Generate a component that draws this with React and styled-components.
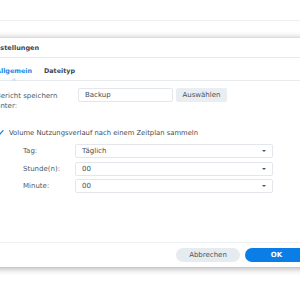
import React from 'react';
import styled, { createGlobalStyle } from 'styled-components';

const GlobalStyle = createGlobalStyle`
  html, body {
    margin: 0;
    padding: 0;
    background: #ffffff;
    overflow: hidden;
  }
  body {
    font-family: "DejaVu Sans", Verdana, sans-serif;
    color: #414b55;
  }
`;

const Page = styled.div`
  width: 300px;
  height: 300px;
  overflow: hidden;
  background: #ffffff;
`;

const BackBar = styled.div`
  height: 20px;
  border-bottom: 1px solid #eceff2;
`;

const Dialog = styled.div`
  width: 346px;
  margin: 17px 0 0 -16px;
  background: #ffffff;
  box-shadow: 0 1px 7px rgba(0, 0, 0, 0.38);
  display: flex;
  flex-direction: column;
`;

const Header = styled.div`
  height: 19px;
  display: flex;
  align-items: center;
  padding-left: 5px;
  border-bottom: 1px solid #e8ebee;
  font-size: 6.5px;
  font-weight: bold;
  color: #3c4650;
`;

const TabBar = styled.div`
  height: 19px;
  display: flex;
  align-items: center;
  gap: 12px;
  padding: 3px 0 0 12px;
  border-bottom: 1px solid #e8ebee;
`;

const Tab = styled.div`
  position: relative;
  height: 100%;
  display: flex;
  align-items: center;
  font-size: 6.4px;
  font-weight: bold;
  color: ${(p) => (p.$active ? '#1a84e0' : '#3c4650')};

  &::after {
    content: '';
    display: ${(p) => (p.$active ? 'block' : 'none')};
    position: absolute;
    left: 50%;
    bottom: -1px;
    margin-left: -3px;
    border-left: 3px solid transparent;
    border-right: 3px solid transparent;
    border-bottom: 3px solid #cfe3f6;
  }
`;

const Body = styled.div`
  box-sizing: border-box;
  height: 161px;
  padding: 7px 0 0 12px;
  display: flex;
  flex-direction: column;
`;

const FieldRow = styled.div`
  display: grid;
  grid-template-columns: 79px 95px 51px;
  align-items: start;
  column-gap: 3px;
`;

const Label = styled.div`
  font-size: 7px;
  line-height: 10px;
  color: #505a64;
  padding-top: ${(p) => p.$top || 0}px;
  padding-left: ${(p) => p.$indent || 0}px;
`;

const TextInput = styled.div`
  box-sizing: border-box;
  height: 14px;
  border: 1px solid #e3e7eb;
  border-radius: 2px;
  padding-left: 6px;
  display: flex;
  align-items: center;
  font-size: 7px;
  color: #414b55;
`;

const GrayButton = styled.div`
  box-sizing: border-box;
  height: 14px;
  border-radius: 2px;
  background: #e9eef3;
  display: flex;
  align-items: center;
  justify-content: center;
  font-size: 7px;
  color: #46505a;
`;

const CheckRow = styled.div`
  display: flex;
  align-items: center;
  gap: 5px;
  height: 8px;
  margin: 18px 0 0 0;
  font-size: 6.8px;
  color: #414b55;
`;

const ScheduleList = styled.div`
  display: flex;
  flex-direction: column;
  gap: 3.5px;
  margin-top: 7px;
`;

const ScheduleRow = styled.div`
  display: grid;
  grid-template-columns: 79px 198px;
  align-items: center;
`;

const Select = styled.div`
  box-sizing: border-box;
  height: 14px;
  border: 1px solid #e3e7eb;
  border-radius: 2px;
  padding: 0 6px;
  display: flex;
  align-items: center;
  justify-content: space-between;
  font-size: 7px;
  color: #414b55;
`;

const Caret = styled.span`
  width: 0;
  height: 0;
  border-left: 2.5px solid transparent;
  border-right: 2.5px solid transparent;
  border-top: 2.5px solid #4a545e;
`;

const Footer = styled.div`
  height: 24px;
  border-top: 1px solid #edf0f3;
  display: flex;
  align-items: center;
  gap: 5px;
  padding-left: 192px;
`;

const PillButton = styled.div`
  width: ${(p) => p.$width}px;
  height: 14px;
  border-radius: 7px;
  background: ${(p) => (p.$primary ? '#0a7ee6' : '#e6ebf0')};
  color: ${(p) => (p.$primary ? '#ffffff' : '#4a545e')};
  display: flex;
  align-items: center;
  justify-content: center;
  font-size: 7px;
  font-weight: ${(p) => (p.$primary ? 'bold' : 'normal')};
`;

function CheckIcon() {
  return (
    <svg width="8" height="8" viewBox="0 0 8 8">
      <path d="M1 4.2 L3 6.2 L7 1.6" fill="none" stroke="#1a84e0" strokeWidth="1.3" strokeLinecap="round" strokeLinejoin="round" />
    </svg>
  );
}

const schedule = [
  { label: 'Tag:', value: 'Täglich' },
  { label: 'Stunde(n):', value: '00' },
  { label: 'Minute:', value: '00' },
];

export default function App() {
  return (
    <Page>
      <GlobalStyle />
      <BackBar />
      <Dialog>
        <Header>Einstellungen</Header>
        <TabBar>
          <Tab $active>Allgemein</Tab>
          <Tab>Dateityp</Tab>
        </TabBar>
        <Body>
          <FieldRow>
            <Label $top={3}>Bericht speichern unter:</Label>
            <TextInput>Backup</TextInput>
            <GrayButton>Auswählen</GrayButton>
          </FieldRow>
          <CheckRow>
            <CheckIcon />
            Volume Nutzungsverlauf nach einem Zeitplan sammeln
          </CheckRow>
          <ScheduleList>
            {schedule.map((row) => (
              <ScheduleRow key={row.label}>
                <Label $indent={27}>{row.label}</Label>
                <Select>
                  {row.value}
                  <Caret />
                </Select>
              </ScheduleRow>
            ))}
          </ScheduleList>
        </Body>
        <Footer>
          <PillButton $width={64}>Abbrechen</PillButton>
          <PillButton $width={63} $primary>OK</PillButton>
        </Footer>
      </Dialog>
    </Page>
  );
}
